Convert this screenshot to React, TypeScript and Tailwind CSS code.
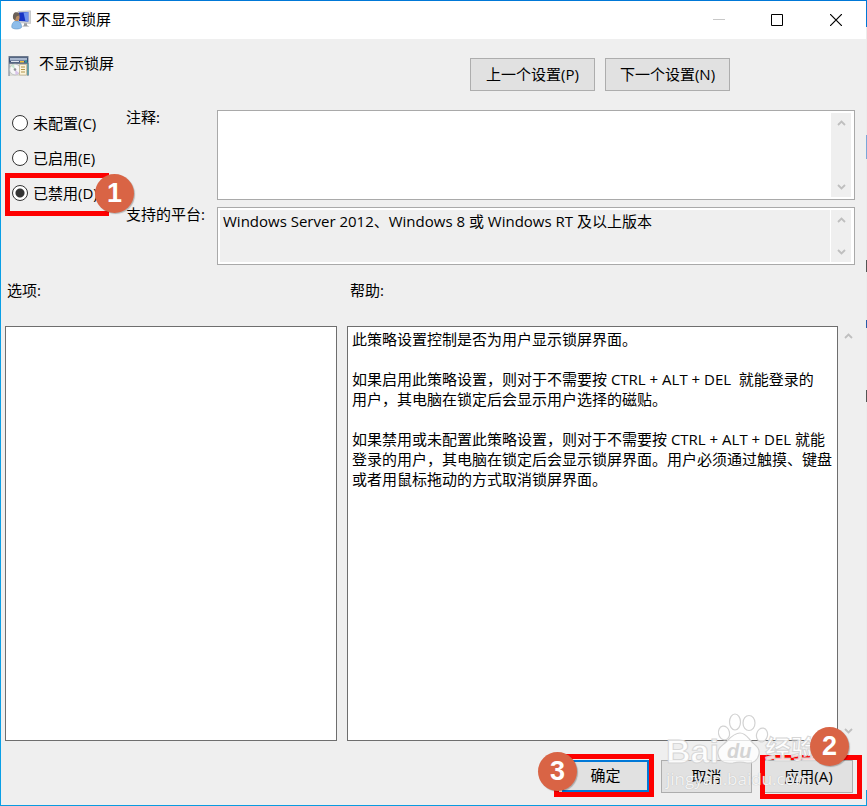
import React, { useState } from "react";
import clsx from "clsx";

const states = [
  { id: "none", label: "未配置(C)" },
  { id: "enabled", label: "已启用(E)" },
  { id: "disabled", label: "已禁用(D)" },
];

const helpText = [
  "此策略设置控制是否为用户显示锁屏界面。",
  "如果启用此策略设置，则对于不需要按 CTRL + ALT + DEL  就能登录的\n用户，其电脑在锁定后会显示用户选择的磁贴。",
  "如果禁用或未配置此策略设置，则对于不需要按 CTRL + ALT + DEL 就能登录的用户，其电脑在锁定后会显示锁屏界面。用户必须通过触摸、键盘或者用鼠标拖动的方式取消锁屏界面。",
];

const UserMonitorIcon = () => (
  <svg width="20" height="20" viewBox="0 0 20 20" aria-hidden="true">
    <path d="M7 1.5 19.5 0.8V13.5L7 12.5z" fill="#d3d5d8" stroke="#b0b3b7" strokeWidth="0.6" />
    <path d="M8 2.6 17.3 2.1V11.6L8 11z" fill="#1733c4" />
    <path d="M12.500 2.400 17.300 2.100V11.600L14.500 11.400z" fill="#6f93ee" />
    <path d="M13 13.2h3v2l2.5 1.2h-7.5l2-1.2z" fill="#9a9da2" />
    <path d="M0.8 17.5C0.5 13 3 11 5.6 11s5.2 2 4.9 6.5c-2 2-7.700 2-9.700 0z" fill="#8dbdea" stroke="#5f95c8" strokeWidth="0.6" />
    <ellipse cx="5.600" cy="7.200" rx="3" ry="3.900" fill="#b98c62" />
    <path d="M2 8C1.600 4 3 2.200 5.400 2.200S9 3.500 8.600 6C6.500 5.500 5 6 4.600 9.500 3.500 10.500 2.200 9.500 2 8z" fill="#6b6158" />
  </svg>
);

const PolicyIcon = () => (
  <svg width="21" height="21" viewBox="0 0 21 21" aria-hidden="true">
    <path d="M0.500 0h20v20h-20z" fill="#6d7a8d" />
    <path d="M1 1.500h19v5H1z" fill="#3f5277" />
    <path d="M2 2h17v2.500H2z" fill="#a9b8cf" />
    <path d="M3 5h8v1H3z" fill="#dfe5ee" />
    <path d="M12 5h4v1.500h-4z" fill="#f0c23a" />
    <path d="M17 4.500h2v2h-2z" fill="#2c9ba0" />
    <path d="M1.500 8h18v12h-18z" fill="#dcdcd6" />
    <circle cx="7" cy="13.500" r="5.400" fill="#f7f7f7" stroke="#aeb4b6" strokeWidth="0.7" />
    <path d="M7 13.500 3 10a5.400 5.400 0 0 1 3-1.700z" fill="#c8e7cf" />
    <path d="M7 13.500 11 17a5.400 5.400 0 0 1-3.500 1.800z" fill="#d9c5ea" />
    <circle cx="7" cy="13.500" r="1.300" fill="#8b8f93" />
    <path d="M11.500 8.500h7v10.500h-7z" fill="#fbf4dc" stroke="#b5a67a" strokeWidth="0.6" />
    <path d="M13 11h4M13 13.500h4M13 16h4" stroke="#b09448" strokeWidth="1" />
    <path d="M19.500 7h1v12h-1z" fill="#2f8f96" />
  </svg>
);

const Arrow = ({ up = false }: { up?: boolean }) => (
  <button
    type="button"
    aria-label={up ? "向上滚动" : "向下滚动"}
    className="flex h-5 w-full items-center justify-center"
  >
    <svg width="9" height="6" viewBox="0 0 9 6" fill="none" stroke="#bfbfbf" strokeWidth="1.800">
      <path d={up ? "M1 5 4.500 1.500 8 5" : "M1 1 4.500 4.500 8 1"} />
    </svg>
  </button>
);

const ScrollBar = ({ className }: { className?: string }) => (
  <div className={clsx("flex w-5 shrink-0 flex-col justify-between", className)}>
    <Arrow up />
    <Arrow />
  </div>
);

const Step = ({ n, className }: { n: number; className: string }) => (
  <span
    className={clsx(
      "absolute z-20 flex size-[39px] items-center justify-center rounded-full bg-[#d96445] font-['Liberation_Sans',sans-serif] text-[27px] leading-none font-bold text-white shadow-[1px_1px_1px_rgba(0,0,0,0.25)]",
      className,
    )}
  >
    {n}
  </span>
);

const Button = ({ text, className }: { text: string; className: string }) => (
  <button type="button" className={clsx("flex items-center justify-center bg-[#e1e1e1] pb-0.5", className)}>
    {text}
  </button>
);

const TitleBar = () => (
  <header className="flex h-[38px] items-center bg-white pl-2.5">
    <UserMonitorIcon />
    <h1 className="ml-[5px] flex-1 pb-0.5">不显示锁屏</h1>
    <button type="button" aria-label="最小化" className="flex h-full w-[58px] items-center justify-center">
      <svg width="12" height="12" stroke="#c8c8c8">
        <path d="M0 5.500h12" />
      </svg>
    </button>
    <button type="button" aria-label="最大化" className="flex h-full w-[58px] items-center justify-center">
      <svg width="12" height="12" fill="none" stroke="#000">
        <path d="M0.500 0.500h11v11h-11z" />
      </svg>
    </button>
    <button type="button" aria-label="关闭" className="flex h-full w-[60px] items-center justify-center">
      <svg width="12" height="12" stroke="#000" strokeWidth="1.200">
        <path d="M0 0 12 12M12 0 0 12" />
      </svg>
    </button>
  </header>
);

const Watermark = () => (
  <div className="pointer-events-none absolute right-10 bottom-1.5 z-10 h-[88px] w-40 text-white/85">
    <span className="absolute top-[22px] left-0 font-['Liberation_Sans',sans-serif] text-[34px] leading-9 font-bold [-webkit-text-stroke:1px_#d6d6d6]">
      Bai
    </span>
    <svg
      className="absolute inset-0"
      width="160"
      height="88"
      fill="#fff"
      fillOpacity="0.8"
      stroke="#d2d2d2"
      strokeWidth="1.200"
    >
      <ellipse cx="69" cy="11" rx="5.500" ry="8" />
      <ellipse cx="83" cy="12" rx="6" ry="7.500" />
      <ellipse cx="58" cy="22" rx="5.500" ry="7" transform="rotate(-12 58 22)" />
      <ellipse cx="96" cy="24" rx="5.500" ry="7" transform="rotate(12 96 24)" />
      <path d="M74 22c6 0 8 5 12 9s8 6 7 12c-1 6-6 10-12 9-4-1-10-1-14 0-8 1-14-2-15-9-1-6 4-8 8-12s8-9 14-9z" />
    </svg>
    <span className="absolute top-7 left-[61px] font-['Liberation_Sans',sans-serif] text-[20px] leading-6 font-bold text-[#d4d4d4] italic">
      du
    </span>
    <span className="absolute top-[22px] left-[99px] text-[26px] leading-8 font-bold [-webkit-text-stroke:1px_#d6d6d6]">
      经验
    </span>
    <span className="absolute bottom-2 left-0 text-[17px] leading-6 [text-shadow:0_0_1px_#aaa]">
      jingyan.baidu.com
    </span>
  </div>
);

const App = () => {
  const [state, setState] = useState("disabled");
  const [comment, setComment] = useState("");

  return (
    <div className="flex min-h-screen bg-[#efefef] font-['Open_Sans','Noto_Sans_CJK_SC',sans-serif] text-[15px] leading-5 text-black">
      <main className="relative flex min-w-0 flex-1 flex-col border-y border-l border-t-[#0078d7] border-b-[#0a9be0] border-l-[#0a9fe6]">
        <TitleBar />

        <div className="flex items-start pt-3.5 pl-[7px]">
          <div className="pt-[3px]">
            <PolicyIcon />
          </div>
          <h2 className="ml-2.5 flex-1">不显示锁屏</h2>
          <div className="mt-[5px] mr-[136px] flex gap-2.5">
            <Button text="上一个设置(P)" className="h-[33px] w-[125px] border border-[#adadad]" />
            <Button text="下一个设置(N)" className="h-[33px] w-[125px] border border-[#adadad]" />
          </div>
        </div>

        <div className="mt-4 flex pr-[11px]">
          <fieldset className="flex w-[125px] shrink-0 flex-col gap-[15px] pt-1.5 pl-[11px]">
            {states.map((item) => (
              <label key={item.id} className="relative flex items-center gap-[5px]">
                <input
                  type="radio"
                  name="state"
                  checked={state === item.id}
                  onChange={() => setState(item.id)}
                  className="size-4 appearance-none rounded-full border border-[#333] bg-white checked:bg-[radial-gradient(circle,#333_4px,#fff_5px)]"
                />
                {item.label}
                {item.id === "disabled" && (
                  <>
                    <span className="absolute -top-2.5 -left-[7px] h-[43px] w-[104px] border-y-5 border-l-5 border-[#fe0000]" />
                    <Step n={1} className="-top-[9px] left-[83px]" />
                  </>
                )}
              </label>
            ))}
          </fieldset>

          <div className="grid flex-1 grid-cols-[91px_1fr] gap-y-1">
            <label htmlFor="comment">注释:</label>
            <div className="mt-[3px] flex h-[90px] border border-[#a9a9a9] bg-white p-0.5">
              <textarea
                id="comment"
                value={comment}
                onChange={(e) => setComment(e.target.value)}
                className="flex-1 resize-none px-1 outline-none"
              />
              <ScrollBar className="mr-px bg-[#efefef]" />
            </div>
            <label htmlFor="platform">支持的平台:</label>
            <div className="mt-[3px] flex h-[58px] border border-[#a9a9a9] bg-white p-0.5">
              <textarea
                id="platform"
                readOnly
                value="Windows Server 2012、Windows 8 或 Windows RT 及以上版本"
                className="flex-1 resize-none overflow-hidden bg-[#efefef] px-[3px] pt-px outline-none"
              />
              <ScrollBar className="mr-px ml-px bg-[#efefef]" />
            </div>
          </div>
        </div>

        <div className="mt-[15px] grid flex-1 grid-cols-[332fr_511fr] grid-rows-[20px_1fr] gap-x-2.5 gap-y-[26px] pr-2 pl-1">
          <h3 className="pl-0.5">选项:</h3>
          <h3 className="pl-[3px]">帮助:</h3>
          <section className="border border-[#6e6e6e] bg-white" />
          <section className="flex">
            <div className="flex flex-1 flex-col gap-5 border border-[#6e6e6e] bg-white py-0.5 pr-1 pl-1">
              {helpText.map((text) => (
                <p key={text} className="whitespace-pre-wrap">
                  {text}
                </p>
              ))}
            </div>
            <ScrollBar />
          </section>
        </div>

        <footer className="mt-[19px] mb-3 flex h-[33px] items-start justify-end gap-3 pr-[13px]">
          <div className="relative">
            <Button text="确定" className="h-8 w-[87px] border-2 border-[#0078d7]" />
            <span className="pointer-events-none absolute -top-1.5 -right-[5px] -bottom-[5px] -left-2 border-5 border-[#fe0000]" />
            <Step n={3} className="-top-2 -left-6" />
          </div>
          <Button text="取消" className="h-[33px] w-[91px] border border-[#adadad]" />
          <div className="relative">
            <Button text="应用(A)" className="h-[33px] w-[89px] border border-[#adadad]" />
            <span className="pointer-events-none absolute -top-[5px] -right-[9px] -bottom-1.5 -left-1 border-5 border-[#fe0000]" />
            <Step n={2} className="-top-[33px] right-1" />
          </div>
        </footer>
        <Watermark />
      </main>

      {/* edge of the window behind */}
      <div className="flex w-px flex-col bg-[#ececec]">
        <div className="h-[27px] bg-[#0078d7]" />
        <div className="mt-[108px] h-6 bg-[#7ba7d9]" />
        <div className="mt-[101px] h-3 bg-[#555]" />
        <div className="mt-12 h-2 bg-[#2a5ca8]" />
        <div className="mt-[62px] h-3 bg-[#555]" />
        <div className="mt-auto h-4 bg-[#0a9be0]" />
      </div>
    </div>
  );
};

export default App;
